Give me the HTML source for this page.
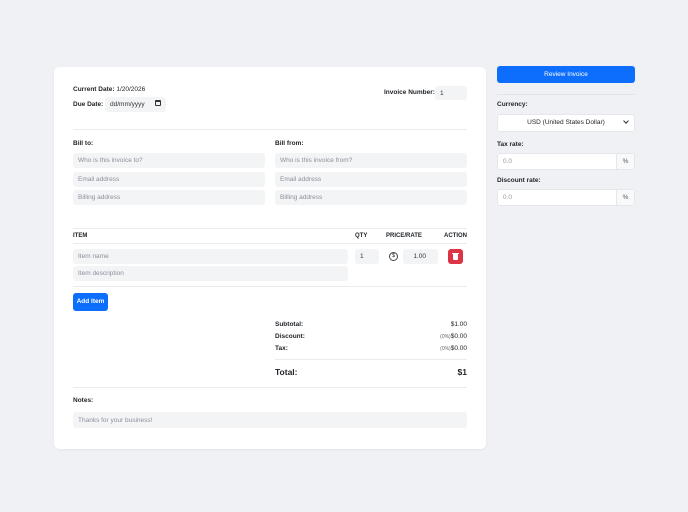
<!DOCTYPE html>
<html><head><style>
*{box-sizing:border-box;margin:0;padding:0}
body{width:688px;height:512px;background:#f0f1f5;font-family:"Liberation Sans",sans-serif;color:#212529;position:relative;overflow:hidden;font-size:6.5px}
.a{position:absolute}
.card{left:54px;top:67px;width:432px;height:382px;background:#fff;border-radius:5px;box-shadow:0 1px 2px rgba(0,0,0,.05)}
.b{font-weight:bold}
.in{position:absolute;background:#f3f4f6;border-radius:3px;color:#8a9099;padding-left:5px;display:flex;align-items:center;font-size:6.5px}
.hr{position:absolute;height:1px;background:#e9ecef}
.r{text-align:right}
</style></head><body>
<div class="a card"></div>
<div class="a" style="left:73px;top:86px"><span class="b">Current Date:</span> 1/20/2026</div>
<div class="a b" style="left:73px;top:101px">Due Date:</div>
<div class="in" style="left:105px;top:97px;width:61px;height:15px;color:#333">dd/mm/yyyy<span style="position:absolute;right:5px;top:3px;width:6px;height:6px;border:1px solid #333;border-top-width:2px;border-radius:1px"></span></div>
<div class="a b" style="left:384px;top:89px">Invoice Number:</div>
<div class="in" style="left:435px;top:86px;width:32px;height:14px;color:#333">1</div>
<div class="hr" style="left:73px;top:129px;width:394px"></div>
<div class="a b" style="left:73px;top:140px">Bill to:</div>
<div class="a b" style="left:275px;top:140px">Bill from:</div>
<div class="in" style="left:73px;top:153px;width:192px;height:15px">Who is this invoice to?</div>
<div class="in" style="left:73px;top:172px;width:192px;height:15px">Email address</div>
<div class="in" style="left:73px;top:190px;width:192px;height:15px">Billing address</div>
<div class="in" style="left:275px;top:153px;width:192px;height:15px">Who is this invoice from?</div>
<div class="in" style="left:275px;top:172px;width:192px;height:15px">Email address</div>
<div class="in" style="left:275px;top:190px;width:192px;height:15px">Billing address</div>
<div class="hr" style="left:73px;top:228px;width:394px"></div>
<div class="a b" style="left:73px;top:233px;font-size:6px">ITEM</div>
<div class="a b" style="left:355px;top:233px;font-size:6px">QTY</div>
<div class="a b" style="left:386px;top:233px;font-size:6px">PRICE/RATE</div>
<div class="a b" style="left:444px;top:233px;font-size:6px">ACTION</div>
<div class="hr" style="left:73px;top:243px;width:394px"></div>
<div class="in" style="left:73px;top:249px;width:275px;height:15px">Item name</div>
<div class="in" style="left:73px;top:266px;width:275px;height:15px">Item description</div>
<div class="in" style="left:355px;top:249px;width:24px;height:15px;color:#333">1</div>
<div class="a" style="left:389px;top:252px;width:9px;height:9px;border:1px solid #444;border-radius:50%;font-size:5.5px;text-align:center;line-height:7px">$</div>
<div class="in" style="left:403px;top:249px;width:35px;height:15px;color:#333;justify-content:flex-end;padding-right:12px">1.00</div>
<div class="a" style="left:448px;top:249px;width:15px;height:15px;background:#dc3545;border-radius:3px"><span style="position:absolute;left:5px;top:5px;width:5px;height:6px;background:#fff;border-radius:0 0 1px 1px"></span><span style="position:absolute;left:4px;top:3.5px;width:7px;height:1px;background:#fff"></span></div>
<div class="hr" style="left:73px;top:286px;width:394px"></div>
<div class="a b" style="left:73px;top:293px;width:35px;height:18px;background:#0d6efd;border-radius:3px;color:#fff;text-align:center;line-height:18px">Add Item</div>
<div class="a b" style="left:275px;top:321px">Subtotal:</div><div class="a r" style="right:221px;top:321px">$1.00</div>
<div class="a b" style="left:275px;top:333px">Discount:</div><div class="a r" style="right:221px;top:333px"><span style="font-size:5px;color:#666">(0%)</span>$0.00</div>
<div class="a b" style="left:275px;top:345px">Tax:</div><div class="a r" style="right:221px;top:345px"><span style="font-size:5px;color:#666">(0%)</span>$0.00</div>
<div class="hr" style="left:275px;top:359px;width:192px"></div>
<div class="a b" style="left:275px;top:367px;font-size:8.5px">Total:</div><div class="a b r" style="right:221px;top:367px;font-size:8.5px">$1</div>
<div class="hr" style="left:73px;top:387px;width:394px"></div>
<div class="a b" style="left:73px;top:397px">Notes:</div>
<div class="in" style="left:73px;top:412px;width:394px;height:16px">Thanks for your business!</div>
<div class="a b" style="left:497px;top:66px;width:138px;height:17px;background:#0d6efd;border-radius:3px;color:#fff;text-align:center;line-height:17px;font-weight:normal">Review Invoice</div>
<div class="hr" style="left:497px;top:94px;width:138px;background:#e2e4e8"></div>
<div class="a b" style="left:497px;top:101px">Currency:</div>
<div class="a" style="left:497px;top:114px;width:138px;height:18px;background:#fff;border-radius:3px;border:1px solid #e5e7eb;text-align:center;line-height:16px">USD (United States Dollar)<span style="position:absolute;right:6px;top:4px;width:4px;height:4px;border-right:1px solid #333;border-bottom:1px solid #333;transform:rotate(45deg)"></span></div>
<div class="a b" style="left:497px;top:141px">Tax rate:</div>
<div class="a" style="left:497px;top:153px;width:138px;height:17px;background:#fff;border:1px solid #e5e7eb;border-radius:3px;color:#999;padding-left:5px;line-height:15px">0.0<span style="position:absolute;right:0;top:0;width:18px;height:15px;border-left:1px solid #e5e7eb;background:#f8f9fa;color:#555;text-align:center">%</span></div>
<div class="a b" style="left:497px;top:177px">Discount rate:</div>
<div class="a" style="left:497px;top:189px;width:138px;height:17px;background:#fff;border:1px solid #e5e7eb;border-radius:3px;color:#999;padding-left:5px;line-height:15px">0.0<span style="position:absolute;right:0;top:0;width:18px;height:15px;border-left:1px solid #e5e7eb;background:#f8f9fa;color:#555;text-align:center">%</span></div>
</body></html>
